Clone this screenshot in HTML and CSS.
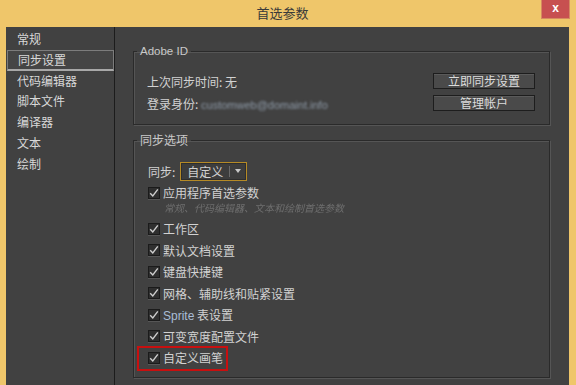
FILE: index.html
```html
<!DOCTYPE html>
<html>
<head>
	<title>首选参数</title>
	<link rel="stylesheet" href="styles.css">
</head>
<body>
	<div class="window">
		<div class="titlebar">
			<span class="title">首选参数</span>
			<span class="close">x</span>
		</div>
		<div class="content">
			<ul class="sidebar">
				<li>常规</li>
				<li class="selected">同步设置</li>
				<li>代码编辑器</li>
				<li>脚本文件</li>
				<li>编译器</li>
				<li>文本</li>
				<li>绘制</li>
			</ul>
			<div class="main">
				<fieldset class="group account">
					<legend>Adobe ID</legend>
					<div class="row">
						<span>上次同步时间: 无</span>
						<button class="btn">立即同步设置</button>
					</div>
					<div class="row">
						<span>登录身份: <span class="email">customweb@domaint.info</span></span>
						<button class="btn">管理帐户</button>
					</div>
				</fieldset>

				<fieldset class="group options">
					<legend>同步选项</legend>
					<div class="sync-row">
						<span>同步:</span>
						<div class="dropdown">
							<span class="value">自定义</span>
							<span class="arrow"></span>
						</div>
					</div>
					<div class="check first">
						<span class="box"><svg width="10" height="10" viewBox="0 0 10 10"><path d="M1.2 5.2 L3.8 8 L8.8 1.4" fill="none" stroke="#cfcfcf" stroke-width="1.4"/></svg></span>
						应用程序首选参数
					</div>
					<div class="hint">常规、代码编辑器、文本和绘制首选参数</div>
					<div class="check">
						<span class="box"><svg width="10" height="10" viewBox="0 0 10 10"><path d="M1.2 5.2 L3.8 8 L8.8 1.4" fill="none" stroke="#cfcfcf" stroke-width="1.4"/></svg></span>
						工作区
					</div>
					<div class="check">
						<span class="box"><svg width="10" height="10" viewBox="0 0 10 10"><path d="M1.2 5.2 L3.8 8 L8.8 1.4" fill="none" stroke="#cfcfcf" stroke-width="1.4"/></svg></span>
						默认文档设置
					</div>
					<div class="check">
						<span class="box"><svg width="10" height="10" viewBox="0 0 10 10"><path d="M1.2 5.2 L3.8 8 L8.8 1.4" fill="none" stroke="#cfcfcf" stroke-width="1.4"/></svg></span>
						键盘快捷键
					</div>
					<div class="check">
						<span class="box"><svg width="10" height="10" viewBox="0 0 10 10"><path d="M1.2 5.2 L3.8 8 L8.8 1.4" fill="none" stroke="#cfcfcf" stroke-width="1.4"/></svg></span>
						网格、辅助线和贴紧设置
					</div>
					<div class="check">
						<span class="box"><svg width="10" height="10" viewBox="0 0 10 10"><path d="M1.2 5.2 L3.8 8 L8.8 1.4" fill="none" stroke="#cfcfcf" stroke-width="1.4"/></svg></span>
						<span><span class="latin">Sprite</span> 表设置</span>
					</div>
					<div class="check">
						<span class="box"><svg width="10" height="10" viewBox="0 0 10 10"><path d="M1.2 5.2 L3.8 8 L8.8 1.4" fill="none" stroke="#cfcfcf" stroke-width="1.4"/></svg></span>
						可变宽度配置文件
					</div>
					<div class="check">
						<span class="marked">
							<span class="box"><svg width="10" height="10" viewBox="0 0 10 10"><path d="M1.2 5.2 L3.8 8 L8.8 1.4" fill="none" stroke="#cfcfcf" stroke-width="1.4"/></svg></span>
							自定义画笔
						</span>
					</div>
				</fieldset>
			</div>
		</div>
	</div>
</body>
</html>
```

FILE: styles.css
```css
body {
	margin: 0;
	padding: 0;
	font-family: "Noto Sans CJK SC", "Liberation Sans", sans-serif;
	font-size: 12px;
	background-color: #efc66a;
}

.window {
	width: 576px;
	height: 385px;
	padding: 0 7px 0 6px;
	box-sizing: border-box;
	background-color: #efc66a;
	overflow: hidden;
}

.titlebar {
	position: relative;
	height: 27px;
	display: flex;
	align-items: center;
	justify-content: center;
	padding-right: 10px;
}

.title {
	font-size: 13px;
	color: #3a3a3a;
	line-height: 16px;
	margin-top: -1px;
}

.close {
	position: absolute;
	right: 0;
	top: 0;
	width: 27px;
	height: 18px;
	background-color: #c75050;
	box-shadow: 0 0 0 1px #d68a60;
	color: #fff;
	font-family: "Liberation Sans", sans-serif;
	font-weight: bold;
	font-size: 12px;
	line-height: 17px;
	text-align: center;
}

.content {
	display: flex;
	height: 358px;
	background-color: #414141;
	color: #d2d2d2;
}

.sidebar {
	list-style: none;
	margin: 0;
	padding: 2px 0 0 0;
	width: 108px;
	border-right: 1px solid #1c1c1c;
}

.sidebar li {
	height: 20.8px;
	line-height: 20.8px;
	padding-left: 11px;
	color: #d8d8d8;
	box-sizing: border-box;
}

.sidebar li.selected {
	margin-left: 1px;
	padding-left: 10px;
	border: 1px solid #7c7c7c;
	border-bottom: 2px solid #a8a8a8;
	background-color: #454545;
	line-height: 17.8px;
}

.main {
	flex: 1;
	padding: 17px 18px 0 18px;
}

.group {
	margin: 0;
	width: 417px;
	box-sizing: border-box;
	border: 1px solid #2a2a2a;
	box-shadow: 1px 1px 0 #555, inset 1px 1px 0 #555;
}

.group legend {
	padding: 0 3px;
	margin-left: -11px;
	line-height: 14px;
	color: #c9c9c9;
	font-size: 12px;
}

.account legend {
	margin-left: -10px;
	font-family: "Liberation Sans", sans-serif;
	font-size: 11.5px;
}

.account {
	padding: 12px 14px 10px 13px;
}

.row {
	display: flex;
	justify-content: space-between;
	align-items: center;
	height: 22px;
}

.email {
	font-family: "Liberation Sans", sans-serif;
	font-size: 11px;
	color: #8e9aa8;
	filter: blur(1.2px);
}

.btn {
	width: 102px;
	height: 16px;
	padding: 0;
	font-family: "Noto Sans CJK SC", sans-serif;
	font-size: 12px;
	line-height: 14px;
	color: #dcdcdc;
	background-color: #4a4a4a;
	border: 1px solid #1d1d1d;
	box-shadow: inset 0 1px 0 #5a5a5a;
}

.options {
	margin-top: 8px;
	padding: 14px 14px 8px 14px;
}

.sync-row {
	display: flex;
	align-items: center;
	gap: 5px;
	height: 20px;
	margin-bottom: 2px;
}

.dropdown {
	display: flex;
	align-items: center;
	width: 67px;
	height: 19px;
	box-sizing: border-box;
	border: 1px solid #b58a26;
	background-color: #3d3d3d;
	box-shadow: inset 0 0 0 1px #2e2e2e;
}

.dropdown .value {
	flex: 1;
	padding-left: 6px;
	line-height: 17px;
	border-right: 1px solid #6a6a6a;
	height: 11px;
	display: flex;
	align-items: center;
}

.dropdown .arrow {
	width: 0;
	height: 0;
	margin: 0 5px 0 5px;
	border-left: 3.5px solid transparent;
	border-right: 3.5px solid transparent;
	border-top: 4px solid #c8c8c8;
}

.check {
	display: flex;
	align-items: center;
	height: 21.5px;
	gap: 3px;
}

.check.first {
	height: 19px;
}

.box {
	display: inline-flex;
	align-items: center;
	justify-content: center;
	width: 12px;
	height: 12px;
	box-sizing: border-box;
	background-color: #2f2f2f;
	border: 1px solid #1b1b1b;
	box-shadow: 0 1px 0 #565656;
}

.latin {
	font-family: "Liberation Sans", sans-serif;
	color: #a9bdd6;
}

.hint {
	margin: 0 0 3.5px 16px;
	font-size: 10px;
	line-height: 12.5px;
	font-style: italic;
	color: #6e6e6e;
	filter: blur(0.4px);
}

.marked {
	position: relative;
	display: inline-flex;
	align-items: center;
	gap: 3px;
}

.marked::after {
	content: "";
	position: absolute;
	left: -11px;
	top: 50%;
	margin-top: -12px;
	width: 91px;
	height: 25px;
	box-sizing: border-box;
	border: 2px solid #c80f0f;
}
```
